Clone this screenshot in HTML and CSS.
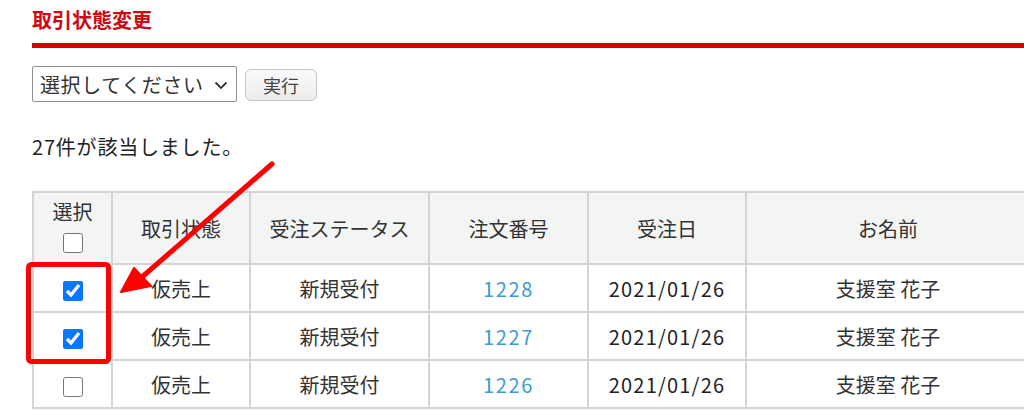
FILE: index.html
```html
<!DOCTYPE html>
<html lang="ja">
<head>
<meta charset="utf-8">
<link rel="stylesheet" href="styles.css">
</head>
<body>
<div class="page">
  <h1 class="title">取引状態変更</h1>
  <div class="controls">
    <div class="select-wrap">
      <select class="select"><option>選択してください</option></select>
      <svg class="chev" width="14" height="9" viewBox="0 0 14 9"><path d="M1.5 1.5 L7 7 L12.5 1.5" fill="none" stroke="#333" stroke-width="1.8"/></svg>
    </div>
    <button class="btn">実行</button>
  </div>
  <p class="result">27件が該当しました。</p>
  <div class="table-wrap">
    <table class="orders">
      <thead>
        <tr>
          <th class="c-sel"><div>選択</div><input type="checkbox" class="cb"></th>
          <th class="c-st">取引状態</th>
          <th class="c-os">受注ステータス</th>
          <th class="c-no">注文番号</th>
          <th class="c-dt">受注日</th>
          <th class="c-nm">お名前</th>
        </tr>
      </thead>
      <tbody>
        <tr>
          <td><input type="checkbox" class="cb" checked></td>
          <td>仮売上</td><td>新規受付</td><td><a class="link" href="#">1228</a></td><td class="date">2021/01/26</td><td>支援室 花子</td>
        </tr>
        <tr>
          <td><input type="checkbox" class="cb" checked></td>
          <td>仮売上</td><td>新規受付</td><td><a class="link" href="#">1227</a></td><td class="date">2021/01/26</td><td>支援室 花子</td>
        </tr>
        <tr>
          <td><input type="checkbox" class="cb"></td>
          <td>仮売上</td><td>新規受付</td><td><a class="link" href="#">1226</a></td><td class="date">2021/01/26</td><td>支援室 花子</td>
        </tr>
      </tbody>
    </table>
    <svg class="annot" width="300" height="220" viewBox="0 0 300 220">
      <rect x="-1.5" y="73.5" width="80" height="97" rx="3" fill="none" stroke="#ff0000" stroke-width="5"/>
      <line x1="242" y1="-27" x2="112" y2="86" stroke="#ff0000" stroke-width="5" stroke-linecap="round"/>
      <polygon points="91,101 104,77 121,95" fill="#ff0000" stroke="#ff0000" stroke-width="2" stroke-linejoin="round"/>
    </svg>
  </div>
</div>
</body>
</html>
```

FILE: styles.css
```css
html, body {
  margin: 0;
  padding: 0;
  background: #ffffff;
}
body {
  font-family: "Noto Sans CJK JP", "Noto Sans", sans-serif;
  color: #333333;
  overflow: hidden;
}
.page {
  padding-left: 32px;
  width: 1100px;
}
.title {
  margin: 5px 0 0;
  font-size: 20px;
  line-height: 30px;
  font-weight: bold;
  color: #cc0a14;
  padding-bottom: 8px;
  border-bottom: 5px solid #d40000;
}
.controls {
  display: flex;
  align-items: center;
  gap: 8px;
  margin-top: 18px;
  height: 36px;
}
.select-wrap {
  position: relative;
  width: 205px;
  height: 36px;
}
.select {
  appearance: none;
  -webkit-appearance: none;
  width: 205px;
  height: 36px;
  box-sizing: border-box;
  border: 1px solid #8f8f8f;
  border-radius: 2px;
  background: #ffffff;
  font-family: inherit;
  font-size: 20px;
  letter-spacing: 0.6px;
  color: #333333;
  padding: 0 0 0 7px;
  margin: 0;
}
.chev {
  position: absolute;
  right: 9px;
  top: 15px;
  pointer-events: none;
}
.btn {
  width: 72px;
  height: 32px;
  box-sizing: border-box;
  border: 1px solid #c4c4d0;
  border-radius: 6px;
  background: linear-gradient(#fafafa, #ececec);
  font-family: inherit;
  font-size: 18px;
  color: #444444;
  padding: 0;
  margin-top: 1px;
}
.result {
  margin: 30px 0 0;
  font-size: 20px;
  line-height: 30px;
  letter-spacing: 0.8px;
  color: #222222;
}
.table-wrap {
  position: relative;
  margin-top: 29px;
}
.orders {
  border-collapse: collapse;
  table-layout: fixed;
  width: 997px;
}
.orders th, .orders td {
  border: 2px solid #d4d4d4;
  text-align: center;
  vertical-align: middle;
  font-size: 20px;
  font-weight: normal;
  padding: 0;
  color: #333333;
}
.orders thead th {
  background: #f3f4f4;
  height: 70px;
}
.orders tbody td {
  height: 46px;
}
.orders .date {
  color: #222222;
  letter-spacing: 1.2px;
}
.c-sel { width: 77px; }
.c-st { width: 136px; }
.c-os { width: 177px; }
.c-no { width: 157px; }
.c-dt { width: 156px; }
.c-nm { width: 282px; }
.c-sel div {
  line-height: 26px;
  margin-top: -4px;
}
.cb {
  width: 20px;
  height: 20px;
  margin: 1px 0 0;
  accent-color: #0a75ff;
  vertical-align: middle;
}
.orders tbody .cb {
  margin: 0;
}
.link {
  color: #3a9bd5;
  text-decoration: none;
  letter-spacing: 1.6px;
}
.annot {
  position: absolute;
  left: -2px;
  top: 0;
  overflow: visible;
}
```
